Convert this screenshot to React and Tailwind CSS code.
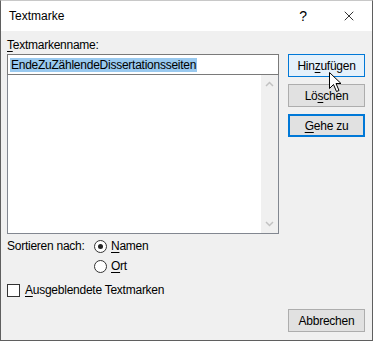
import { X } from "lucide-react";

const font = { fontFamily: '"Liberation Sans", Arial, sans-serif' };

function U({ children }) {
  return <span className="underline underline-offset-2">{children}</span>;
}

function Btn({ children, variant = "normal", className = "" }) {
  const styles = {
    hover: "border border-[#0078d7] bg-[#e5f1fb]",
    normal: "border border-[#adadad] bg-[#e1e1e1]",
    default: "border-2 border-[#0078d7] bg-[#e1e1e1]",
  };
  return (
    <div
      className={`w-[77px] h-[23px] flex items-center justify-center text-[12px] text-black ${styles[variant]} ${className}`}
    >
      {children}
    </div>
  );
}

function Cursor() {
  return (
    <svg className="absolute left-[328px] top-[71px]" width="14" height="22" viewBox="0 0 14 22">
      <path
        d="M0.5 0.5 V16.5 L4.5 12.5 L7.5 19.5 L10 18.5 L7 11.5 H12 Z"
        fill="#fff"
        stroke="#000"
        strokeWidth="1"
        strokeLinejoin="miter"
      />
    </svg>
  );
}

export default function App() {
  return (
    <div className="w-[374px] h-[341px] bg-white tracking-[-0.25px]" style={font}>
      <div className="relative w-[373px] h-[341px] border border-[#5f5f5f] border-t-[#c8c8c8] flex flex-col bg-[#f0f0f0]">
        {/* title bar */}
        <div className="h-[30px] bg-white flex items-center shrink-0">
          <span className="pl-[8px] text-[12px] text-black flex-1 tracking-normal">Textmarke</span>
          <span className="w-[46px] text-center text-[14px] text-black">?</span>
          <span className="w-[46px] flex justify-center">
            <X className="w-[16px] h-[16px] text-black" strokeWidth={1.2} />
          </span>
        </div>

        <div className="flex flex-1 pl-[6px] pr-[7px] pt-[7px]">
          <div className="w-[272px] flex flex-col">
            <div className="text-[12px] leading-[15px] text-black h-[16px]">
              <U>T</U>extmarkenname:
            </div>
            <div className="h-[21px] bg-white border border-[#7a7a7a] flex items-center px-[2px]">
              <span className="bg-[#99c9ef] text-[12px] leading-[14px] text-black px-[1px]">
                EndeZuZählendeDissertationsseiten
              </span>
            </div>
            <div className="h-[159px] bg-white border border-[#828790] border-t-0 flex justify-end">
              <div className="w-[17px] bg-[#f0f0f0] flex flex-col justify-between items-center py-[6px]">
                <svg width="9" height="6" viewBox="0 0 9 6">
                  <path d="M1 5 L4.5 1.5 L8 5" fill="none" stroke="#c2c2c2" strokeWidth="1.5" />
                </svg>
                <svg width="9" height="6" viewBox="0 0 9 6">
                  <path d="M1 1 L4.5 4.5 L8 1" fill="none" stroke="#c2c2c2" strokeWidth="1.5" />
                </svg>
              </div>
            </div>

            <div className="flex mt-[2px] text-[12px] text-black">
              <div className="w-[87px] h-[20px] flex items-center">Sortieren nach:</div>
              <div className="flex flex-col">
                <div className="h-[20px] flex items-center gap-[4px]">
                  <span className="w-[13px] h-[13px] rounded-full border border-[#333] bg-white flex items-center justify-center">
                    <span className="w-[5px] h-[5px] rounded-full bg-[#222]" />
                  </span>
                  <span>
                    <U>N</U>amen
                  </span>
                </div>
                <div className="h-[20px] flex items-center gap-[4px]">
                  <span className="w-[13px] h-[13px] rounded-full border border-[#333] bg-white" />
                  <span>
                    <U>O</U>rt
                  </span>
                </div>
              </div>
            </div>

            <div className="flex items-center gap-[5px] mt-[6px] h-[16px] text-[12px] text-black">
              <span className="w-[13px] h-[13px] border border-[#333] bg-white" />
              <span>
                <U>A</U>usgeblendete Textmarken
              </span>
            </div>
          </div>

          <div className="flex-1 flex flex-col items-end pt-[16px]">
            <Btn variant="hover">
              Hin<U>z</U>ufügen
            </Btn>
            <Btn className="mt-[7px]">
              Lö<U>s</U>chen
            </Btn>
            <Btn variant="default" className="mt-[7px]">
              <U>G</U>ehe zu
            </Btn>
            <div className="flex-1" />
            <Btn className="mb-[8px]">Abbrechen</Btn>
          </div>
        </div>
        <Cursor />
      </div>
    </div>
  );
}
